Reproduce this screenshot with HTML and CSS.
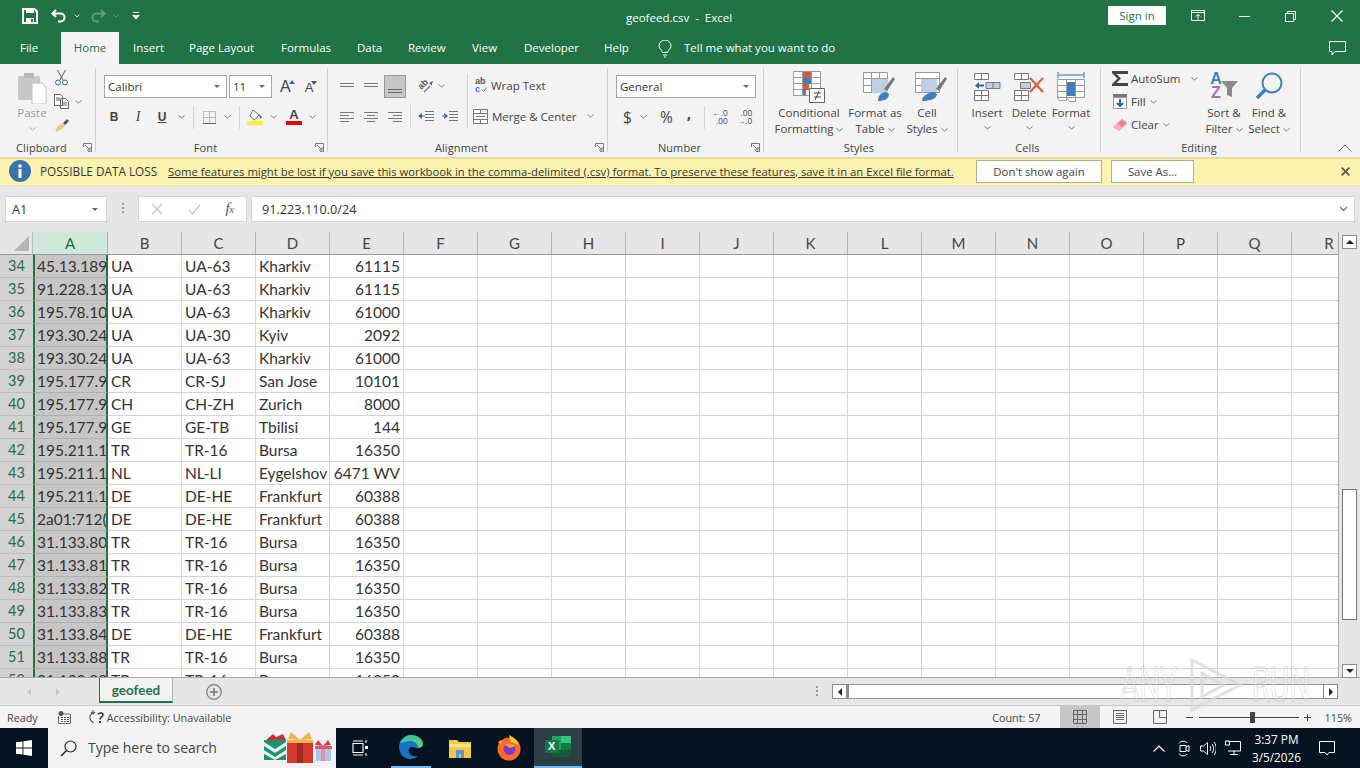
FILE: index.html
```html
<!DOCTYPE html>
<html>
    <head>
        <meta charset="UTF-8">
        <title>geofeed.csv - Excel</title>
        <link rel="stylesheet" href="styles.css">
    </head>
    <body>
        <div class="application">
            <!-- title bar -->
            <div class="titlebar">
                <div class="quick-access">
                    <svg class="qa-save" width="16" height="16" viewBox="0 0 16 16"><path d="M1 1h11.5L15 3.5V15H1z" fill="none" stroke="#fff" stroke-width="2"/><path d="M4 1h8v4H4zM4 10h8v5H4z" fill="#fff"/><path d="M9 11h2v3H9z" fill="#217346"/></svg>
                    <svg class="qa-undo" width="16" height="14" viewBox="0 0 16 14"><path d="M5 1 1.5 4.5 5 8M2 4.5h7.5a4 4 0 0 1 0 8H7" fill="none" stroke="#fff" stroke-width="2"/></svg>
                    <svg class="caret" width="6" height="4" viewBox="0 0 6 4"><path d="M.5.500 3 3 5.500.500" fill="none" stroke="#cfe0d6"/></svg>
                    <svg class="qa-redo" width="16" height="14" viewBox="0 0 16 14"><path d="M11 1l3.500 3.500L11 8M14 4.500H6.500a4 4 0 0 0 0 8H9" fill="none" stroke="#5f9c7b" stroke-width="2"/></svg>
                    <svg class="caret" width="6" height="4" viewBox="0 0 6 4"><path d="M.5.500 3 3 5.500.500" fill="none" stroke="#5f9c7b"/></svg>
                    <svg class="qa-more" width="8" height="8" viewBox="0 0 8 8"><path d="M1 0h6v1H1zM0 3h8L4 7.500z" fill="#fff"/></svg>
                </div>
                <div class="doc-title">geofeed.csv &nbsp;-&nbsp; Excel</div>
                <div class="window-controls">
                    <button class="signin">Sign in</button>
                    <svg class="win-display" width="14" height="12" viewBox="0 0 14 12"><path d="M.5.500h13v10H.5zM.5 2.500h13M7 9.500V4.500M4.800 6.500 7 4.300l2.200 2.200" fill="none" stroke="#fff"/></svg>
                    <svg class="win-min" width="11" height="1" viewBox="0 0 11 1"><path d="M0 0h11v1H0z" fill="#fff"/></svg>
                    <svg class="win-max" width="11" height="11" viewBox="0 0 11 11"><path d="M.5 2.500h8v8h-8zM2.500 2.500v-2h8v8h-2" fill="none" stroke="#fff"/></svg>
                    <svg class="win-close" width="12" height="12" viewBox="0 0 12 12"><path d="M.5.500l11 11M11.500.500l-11 11" fill="none" stroke="#fff" stroke-width="1.100"/></svg>
                </div>
            </div>

            <!-- tabs -->
            <div class="tabs">
                <span class="tab tab-file">File</span>
                <span class="tab tab-active">Home</span>
                <span class="tab tab-insert">Insert</span>
                <span class="tab tab-layout">Page Layout</span>
                <span class="tab tab-formulas">Formulas</span>
                <span class="tab tab-data">Data</span>
                <span class="tab tab-review">Review</span>
                <span class="tab tab-view">View</span>
                <span class="tab tab-dev">Developer</span>
                <span class="tab tab-help">Help</span>
                <svg class="bulb" width="14" height="18" viewBox="0 0 14 18"><path d="M4.500 12.500C4 9.500 1 9 1 6a6 6 0 0 1 12 0c0 3-3 3.500-3.500 6.500zM5 15h4M6 17h2" fill="none" stroke="#fff"/></svg>
                <span class="tab tab-tell">Tell me what you want to do</span>
                <svg class="comment-icon" width="17" height="15" viewBox="0 0 17 15"><path d="M.5.500h16v10H6L3 14v-3.500H.5z" fill="none" stroke="#fff"/></svg>
            </div>

            <!-- ribbon -->
            <div class="ribbon">
                <div class="group group-clipboard">
                    <div class="group-body clipboard-body">
                        <div class="paste">
                            <svg width="30" height="33" viewBox="0 0 30 33"><path d="M1 5h22v24H1z" fill="#c8c8c8"/><path d="M7 2h10v5H7z" fill="#b5b5b5"/><path d="M15 12h10l4 4v17H15z" fill="#fff" stroke="#c4c4c4"/></svg>
                            <span class="muted">Paste</span>
                            <svg class="caret-s" width="7" height="4" viewBox="0 0 7 4"><path d="M.5.500 3.500 3l3-2.500" fill="none" stroke="#aaa"/></svg>
                        </div>
                        <div class="clip-tools">
                            <svg width="15" height="16" viewBox="0 0 15 16"><path d="M3.500 0 9 10M11.500 0 6 10" fill="none" stroke="#555"/><circle cx="4" cy="12.500" r="2.500" fill="none" stroke="#2c6aa6"/><circle cx="11" cy="12.500" r="2.500" fill="none" stroke="#2c6aa6"/></svg>
                            <div class="copy-row">
                                <svg width="15" height="15" viewBox="0 0 15 15"><path d="M.5.500h6l2 2v9h-8zM6.500 4.500h5l3 3v7h-8zM2 4h4M2 6h4M8 9h5M8 11h5" fill="#fff" stroke="#666"/></svg>
                                <svg class="caret-s" width="7" height="4" viewBox="0 0 7 4"><path d="M.5.500 3.500 3l3-2.500" fill="none" stroke="#777"/></svg>
                            </div>
                            <svg width="16" height="16" viewBox="0 0 16 16"><path d="M9 6l4-4 2 2-4 4z" fill="#555"/><path d="M8 6l3 3-3 3-5 3-2-2 3-4z" fill="#e6c98c"/></svg>
                        </div>
                    </div>
                    <div class="group-foot"><span class="group-label">Clipboard</span><svg class="launcher" width="9" height="9" viewBox="0 0 9 9"><path d="M.5 4V.500H8.500v8H5M2 2l5 5M7 4v3H4" fill="none" stroke="#777"/></svg></div>
                </div>

                <div class="group group-font">
                    <div class="group-body font-body">
                        <div class="tool-row font-row1">
                            <div class="select select-font"><span>Calibri</span><i class="drop"></i></div>
                            <div class="select select-size"><span>11</span><i class="drop"></i></div>
                            <span class="aa aa-grow">A<svg width="6" height="4" viewBox="0 0 6 4"><path d="M0 4l3-4 3 4z" fill="#2c6aa6"/></svg></span>
                            <span class="aa aa-shrink">A<svg width="6" height="4" viewBox="0 0 6 4"><path d="M0 0h6L3 4z" fill="#555"/></svg></span>
                        </div>
                        <div class="tool-row font-row2">
                            <b class="fmt fmt-b">B</b>
                            <i class="fmt fmt-i">I</i>
                            <u class="fmt fmt-u">U</u>
                            <svg class="caret-s caret-u" width="7" height="4" viewBox="0 0 7 4"><path d="M.5.500 3.500 3l3-2.500" fill="none" stroke="#777"/></svg>
                            <span class="vsep vsep-a"></span>
                            <svg class="borders" width="13" height="13" viewBox="0 0 13 13"><path d="M.5.500h12v12H.5zM6.500.500v12M.5 6.500h12" fill="none" stroke="#888" stroke-dasharray="1 1"/><path d="M0 12h13v1H0z" fill="#666"/></svg>
                            <svg class="caret-s" width="7" height="4" viewBox="0 0 7 4"><path d="M.5.500 3.500 3l3-2.500" fill="none" stroke="#777"/></svg>
                            <span class="vsep vsep-b"></span>
                            <svg class="fill-color" width="17" height="16" viewBox="0 0 17 16"><path d="M6 1l6 5-4.500 5L3 7z" fill="#fff" stroke="#666"/><path d="M12 5l3 3-2 2z" fill="#2c6aa6"/><path d="M0 12h16v4H0z" fill="#ffef2e"/></svg>
                            <svg class="caret-s caret-fill" width="7" height="4" viewBox="0 0 7 4"><path d="M.5.500 3.500 3l3-2.500" fill="none" stroke="#777"/></svg>
                            <span class="font-color">A</span>
                            <svg class="caret-s caret-color" width="7" height="4" viewBox="0 0 7 4"><path d="M.5.500 3.500 3l3-2.500" fill="none" stroke="#777"/></svg>
                        </div>
                    </div>
                    <div class="group-foot"><span class="group-label">Font</span><svg class="launcher" width="9" height="9" viewBox="0 0 9 9"><path d="M.5 4V.500H8.500v8H5M2 2l5 5M7 4v3H4" fill="none" stroke="#777"/></svg></div>
                </div>

                <div class="group group-align">
                    <div class="group-body align-body">
                        <div class="align-icons">
                            <div class="tool-row align-row">
                                <svg class="al" width="14" height="6" viewBox="0 0 14 6"><path d="M0 .5h14M0 3.500h14" stroke="#777"/></svg>
                                <svg class="al al-mid" width="14" height="6" viewBox="0 0 14 6"><path d="M0 .5h14M0 3.500h14" stroke="#777"/></svg>
                                <span class="al-bottom"><svg width="14" height="6" viewBox="0 0 14 6"><path d="M0 .5h14M0 3.500h14" stroke="#666"/></svg></span>
                                <span class="orient"><span>ab</span><svg width="16" height="15" viewBox="0 0 16 15"><path d="M6 13l6-6" stroke="#777" stroke-width="1.200"/><path d="M11 4l4-2-1.500 4.500z" fill="#2c6aa6"/></svg></span>
                                <svg class="caret-s" width="7" height="4" viewBox="0 0 7 4"><path d="M.5.500 3.500 3l3-2.500" fill="none" stroke="#777"/></svg>
                            </div>
                            <div class="tool-row align-row2">
                                <svg class="al" width="14" height="10" viewBox="0 0 14 10"><path d="M0 .5h14M0 3.500h9M0 6.500h14M0 9.500h9" stroke="#777"/></svg>
                                <svg class="al al-mid2" width="14" height="10" viewBox="0 0 14 10"><path d="M0 .5h14M3 3.500h8M0 6.500h14M3 9.500h8" stroke="#777"/></svg>
                                <svg class="al al-mid2" width="14" height="10" viewBox="0 0 14 10"><path d="M0 .5h14M5 3.500h9M0 6.500h14M5 9.500h9" stroke="#777"/></svg>
                                <span class="vsep vsep-c"></span>
                                <svg class="indent" width="16" height="11" viewBox="0 0 16 11"><path d="M7 .5h9M7 3.500h9M7 6.500h9M7 9.500h9" stroke="#777"/><path d="M0 5l4-3v6zM3 4.500h4v1H3z" fill="#2c6aa6"/></svg>
                                <svg class="indent indent-r" width="16" height="11" viewBox="0 0 16 11"><path d="M7 .5h9M7 3.500h9M7 6.500h9M7 9.500h9" stroke="#777"/><path d="M6 5 2 2v6zM0 4.500h3v1H0z" fill="#2c6aa6"/></svg>
                            </div>
                        </div>
                        <span class="vsep vsep-d"></span>
                        <div class="align-wrap">
                            <div class="wrap-row">
                                <span class="wrap-ico"><span>ab</span><span class="wrap-c"><span>c</span><svg width="6" height="5" viewBox="0 0 6 5"><path d="M.5 2.500l2 2 3-4" fill="none" stroke="#777"/></svg></span></span>
                                <span>Wrap Text</span>
                            </div>
                            <div class="wrap-row merge-row">
                                <svg width="15" height="15" viewBox="0 0 15 15"><path d="M.5.500h14v14H.5zM.5 4.500h14M.5 10.500h14M7.500.500v4M7.500 10.500v4M3 7.500h9" fill="#fff" stroke="#777"/></svg>
                                <span>Merge &amp; Center</span>
                                <svg class="caret-s merge-caret" width="7" height="4" viewBox="0 0 7 4"><path d="M.5.500 3.500 3l3-2.500" fill="none" stroke="#777"/></svg>
                            </div>
                        </div>
                    </div>
                    <div class="group-foot"><span class="group-label">Alignment</span><svg class="launcher" width="9" height="9" viewBox="0 0 9 9"><path d="M.5 4V.500H8.500v8H5M2 2l5 5M7 4v3H4" fill="none" stroke="#777"/></svg></div>
                </div>

                <div class="group group-number">
                    <div class="group-body number-body">
                        <div class="select select-general"><span>General</span><i class="drop"></i></div>
                        <div class="tool-row number-row">
                            <span class="num-sym num-dollar">$</span>
                            <svg class="caret-s" width="7" height="4" viewBox="0 0 7 4"><path d="M.5.500 3.500 3l3-2.500" fill="none" stroke="#777"/></svg>
                            <span class="num-sym num-pct">%</span>
                            <span class="num-sym num-comma">,</span>
                            <span class="vsep vsep-e"></span>
                            <span class="dec"><span class="dec-top"><em>←</em>.0</span><span>.00</span></span>
                            <span class="dec dec-right"><span>.00</span><span class="dec-top"><em>→</em>.0</span></span>
                        </div>
                    </div>
                    <div class="group-foot"><span class="group-label">Number</span><svg class="launcher" width="9" height="9" viewBox="0 0 9 9"><path d="M.5 4V.500H8.500v8H5M2 2l5 5M7 4v3H4" fill="none" stroke="#777"/></svg></div>
                </div>

                <div class="group group-styles">
                    <div class="group-body big-body styles-body">
                        <div class="big-btn btn-cond">
                            <svg width="32" height="32" viewBox="0 0 32 32"><path d="M.5.500h27v24H.5zM.5 6.500h27M.5 12.500h27M.5 18.500h27M9.500.500v24M18.500.500v24" fill="#fff" stroke="#999"/><path d="M1 1h8v6H1z" fill="#d9573f" transform="translate(9)"/><path d="M10 7h8v6h-8z" fill="#3f7fbf"/><path d="M10 13h6v6h-6z" fill="#d9573f"/><path d="M10 19h3v5h-3z" fill="#3f7fbf"/><path d="M16.500 17.500h15v14h-15z" fill="#fff" stroke="#666"/><path d="M21 22h7M21 26h7M26 20l-4 9" stroke="#444" fill="none"/></svg>
                            <span>Conditional<br>Formatting <svg class="caret-s" width="7" height="4" viewBox="0 0 7 4"><path d="M.5.500 3.500 3l3-2.500" fill="none" stroke="#777"/></svg></span>
                        </div>
                        <div class="big-btn btn-table">
                            <svg width="32" height="30" viewBox="0 0 32 30"><path d="M.5.500h24v20H.5zM.5 6.500h24M.5 13.500h24M8.500.500v20M16.500.500v20" fill="#fff" stroke="#999"/><path d="M9 7h16v14H9z" fill="#bccfe3"/><path d="M21 17l9-12 2 2-8 12z" fill="#777"/><path d="M15 29c0-6 4-9 8-9l3 2c0 5-5 7-11 7z" fill="#3f7fbf"/></svg>
                            <span>Format as<br>Table <svg class="caret-s" width="7" height="4" viewBox="0 0 7 4"><path d="M.5.500 3.500 3l3-2.500" fill="none" stroke="#777"/></svg></span>
                        </div>
                        <div class="big-btn btn-cell">
                            <svg width="32" height="30" viewBox="0 0 32 30"><path d="M.5.500h24v20H.5zM.5 6.500h24M.5 13.500h24" fill="#fff" stroke="#999"/><path d="M6 7h16v13H6z" fill="#bccfe3"/><path d="M21 17l9-12 2 2-8 12z" fill="#777"/><path d="M7 29c0-6 8-9 12-9l3 2c0 5-8 7-15 7z" fill="#3f7fbf"/></svg>
                            <span>Cell<br>Styles <svg class="caret-s" width="7" height="4" viewBox="0 0 7 4"><path d="M.5.500 3.500 3l3-2.500" fill="none" stroke="#777"/></svg></span>
                        </div>
                    </div>
                    <div class="group-foot"><span class="group-label">Styles</span></div>
                </div>

                <div class="group group-cells">
                    <div class="group-body big-body cells-body">
                        <div class="big-btn btn-insert">
                            <svg width="27" height="28" viewBox="0 0 27 28"><path d="M.5.500h14v6H.5zM7.500.500v6M.5 17.500h14v10H.5zM.5 22.500h14M7.500 17.500v10" fill="#fff" stroke="#777"/><path d="M12 9.500h14v6H12z" fill="#bccfe3" stroke="#777"/><path d="M19 9.500v6" stroke="#777"/><path d="M1 12.500l4-3.500v2.500h5v2H5V16z" fill="#2c6aa6"/></svg>
                            <span>Insert</span>
                            <svg class="caret-s" width="7" height="4" viewBox="0 0 7 4"><path d="M.5.500 3.500 3l3-2.500" fill="none" stroke="#777"/></svg>
                        </div>
                        <div class="big-btn btn-delete">
                            <svg width="31" height="28" viewBox="0 0 31 28"><path d="M.5.500h14v6H.5zM7.500.500v6M.5 17.500h14v10H.5zM.5 22.500h14M7.500 17.500v10" fill="#fff" stroke="#777"/><path d="M6.500 9.500h10v6h-10z" fill="#bccfe3" stroke="#777"/><path d="M16 5l13 14M29 5 16 19" stroke="#d9573f" stroke-width="2" fill="none"/></svg>
                            <span>Delete</span>
                            <svg class="caret-s" width="7" height="4" viewBox="0 0 7 4"><path d="M.5.500 3.500 3l3-2.500" fill="none" stroke="#777"/></svg>
                        </div>
                        <div class="big-btn btn-format">
                            <svg width="28" height="31" viewBox="0 0 28 31"><path d="M1 1v6M27 1v6M2 4h24" stroke="#2c6aa6" fill="none"/><path d="M.5 8.500h27v18H.5zM9.500 8.500v18M18.500 8.500v18M.5 14.500h27M.5 20.500h27" fill="#fff" stroke="#999"/><path d="M10 11h8v14h-8z" fill="#3f7fbf"/><path d="M.5 26.500h9v3h-7zM9.500 26.500h9v4h-6z" fill="#fff" stroke="#999"/></svg>
                            <span>Format</span>
                            <svg class="caret-s" width="7" height="4" viewBox="0 0 7 4"><path d="M.5.500 3.500 3l3-2.500" fill="none" stroke="#777"/></svg>
                        </div>
                    </div>
                    <div class="group-foot"><span class="group-label">Cells</span></div>
                </div>

                <div class="group group-editing">
                    <div class="group-body editing-body">
                        <div class="edit-list">
                            <div class="edit-row">
                                <svg width="16" height="15" viewBox="0 0 16 15"><path d="M0 0h16v3H4.500L9 7.500 4.500 12H16v3H0v-2l5.500-5.500L0 2z" fill="#444"/></svg>
                                <span>AutoSum</span>
                                <svg class="caret-s sum-caret" width="7" height="4" viewBox="0 0 7 4"><path d="M.5.500 3.500 3l3-2.500" fill="none" stroke="#777"/></svg>
                            </div>
                            <div class="edit-row">
                                <svg class="edit-ico" width="14" height="15" viewBox="0 0 14 15"><path d="M0 0h14v3H0z" fill="#777"/><path d="M.5 3.500h13v11H.5z" fill="#fff" stroke="#999"/><path d="M7 5v7M4 9l3 3 3-3" fill="none" stroke="#2c6aa6" stroke-width="2"/></svg>
                                <span>Fill</span>
                                <svg class="caret-s" width="7" height="4" viewBox="0 0 7 4"><path d="M.5.500 3.500 3l3-2.500" fill="none" stroke="#777"/></svg>
                            </div>
                            <div class="edit-row">
                                <svg class="edit-ico" width="14" height="12" viewBox="0 0 14 12"><path d="M9 0l5 4-8 8-6-4z" fill="#ee7f92"/><path d="M0 8l4-4 5 4-3 4z" fill="#f6b4c0"/></svg>
                                <span>Clear</span>
                                <svg class="caret-s" width="7" height="4" viewBox="0 0 7 4"><path d="M.5.500 3.500 3l3-2.500" fill="none" stroke="#777"/></svg>
                            </div>
                        </div>
                        <div class="big-btn btn-sort">
                            <div class="sort-ico">
                                <span class="az"><span class="az-a">A</span><span class="az-z">Z</span></span>
                                <svg width="17" height="16" viewBox="0 0 17 16"><path d="M0 0h17l-6 7v9l-5-2V7z" fill="#8a8a8a"/></svg>
                            </div>
                            <span>Sort &amp;<br>Filter <svg class="caret-s" width="7" height="4" viewBox="0 0 7 4"><path d="M.5.500 3.500 3l3-2.500" fill="none" stroke="#777"/></svg></span>
                        </div>
                        <div class="big-btn btn-find">
                            <svg width="28" height="28" viewBox="0 0 28 28"><circle cx="17" cy="11" r="9.500" fill="none" stroke="#3f7fbf" stroke-width="2"/><path d="M10 18 2 26" stroke="#3f7fbf" stroke-width="3.500"/></svg>
                            <span>Find &amp;<br>Select <svg class="caret-s" width="7" height="4" viewBox="0 0 7 4"><path d="M.5.500 3.500 3l3-2.500" fill="none" stroke="#777"/></svg></span>
                        </div>
                    </div>
                    <div class="group-foot"><span class="group-label">Editing</span></div>
                </div>

                <div class="ribbon-end">
                    <svg width="14" height="8" viewBox="0 0 14 8"><path d="M.5 7.500 7 1l6.500 6.500" fill="none" stroke="#666"/></svg>
                </div>
            </div>

            <!-- message bar -->
            <div class="message-bar">
                <svg class="info" width="22" height="22" viewBox="0 0 22 22"><circle cx="11" cy="11" r="11" fill="#3a74b0"/><path d="M9.500 9h3v9h-3z" fill="#fff"/><circle cx="11" cy="6" r="1.800" fill="#fff"/></svg>
                <span class="msg-title">POSSIBLE DATA LOSS</span>
                <a class="msg-link">Some features might be lost if you save this workbook in the comma-delimited (.csv) format. To preserve these features, save it in an Excel file format.</a>
                <button class="msg-btn btn-dont">Don't show again</button>
                <button class="msg-btn btn-save">Save As...</button>
                <svg class="msg-close" width="9" height="9" viewBox="0 0 9 9"><path d="M.7.700l7.600 7.600M8.300.700.700 8.300" stroke="#555" stroke-width="1.800" fill="none"/></svg>
            </div>

            <!-- formula bar -->
            <div class="formula-bar">
                <div class="name-box"><span>A1</span><i class="drop"></i></div>
                <span class="grip"></span>
                <div class="fx-box">
                    <svg width="12" height="12" viewBox="0 0 12 12"><path d="M1 1l10 10M11 1 1 11" stroke="#c8c8c8" stroke-width="1.500"/></svg>
                    <svg width="13" height="11" viewBox="0 0 13 11"><path d="M1 6l3.500 4L12 1" fill="none" stroke="#c8c8c8" stroke-width="1.500"/></svg>
                    <span class="fx">f<sub>x</sub></span>
                </div>
                <div class="formula-input"><span>91.223.110.0/24</span><svg width="9" height="6" viewBox="0 0 9 6"><path d="M1 1l3.500 3.500L8 1" fill="none" stroke="#777" stroke-width="1.300"/></svg></div>
            </div>

            <!-- sheet -->
            <div class="sheet-area">
                <div class="sheet-main">
                    <div class="col-heads">
                        <div class="corner"><i></i></div>
                        <div class="col col-a">A</div><div class="col">B</div><div class="col">C</div><div class="col">D</div><div class="col">E</div><div class="col">F</div><div class="col">G</div><div class="col">H</div><div class="col">I</div><div class="col">J</div><div class="col">K</div><div class="col">L</div><div class="col">M</div><div class="col">N</div><div class="col">O</div><div class="col">P</div><div class="col">Q</div><div class="col col-r">R</div>
                    </div>
                    <div class="rows">
                        <div class="row"><div class="num">34</div><div class="c a">45.13.189</div><div class="c">UA</div><div class="c">UA-63</div><div class="c">Kharkiv</div><div class="c n">61115</div></div>
                        <div class="row"><div class="num">35</div><div class="c a">91.228.13</div><div class="c">UA</div><div class="c">UA-63</div><div class="c">Kharkiv</div><div class="c n">61115</div></div>
                        <div class="row"><div class="num">36</div><div class="c a">195.78.10</div><div class="c">UA</div><div class="c">UA-63</div><div class="c">Kharkiv</div><div class="c n">61000</div></div>
                        <div class="row"><div class="num">37</div><div class="c a">193.30.24</div><div class="c">UA</div><div class="c">UA-30</div><div class="c">Kyiv</div><div class="c n">2092</div></div>
                        <div class="row"><div class="num">38</div><div class="c a">193.30.24</div><div class="c">UA</div><div class="c">UA-63</div><div class="c">Kharkiv</div><div class="c n">61000</div></div>
                        <div class="row"><div class="num">39</div><div class="c a">195.177.9</div><div class="c">CR</div><div class="c">CR-SJ</div><div class="c">San Jose</div><div class="c n">10101</div></div>
                        <div class="row"><div class="num">40</div><div class="c a">195.177.9</div><div class="c">CH</div><div class="c">CH-ZH</div><div class="c">Zurich</div><div class="c n">8000</div></div>
                        <div class="row"><div class="num">41</div><div class="c a">195.177.9</div><div class="c">GE</div><div class="c">GE-TB</div><div class="c">Tbilisi</div><div class="c n">144</div></div>
                        <div class="row"><div class="num">42</div><div class="c a">195.211.1</div><div class="c">TR</div><div class="c">TR-16</div><div class="c">Bursa</div><div class="c n">16350</div></div>
                        <div class="row"><div class="num">43</div><div class="c a">195.211.1</div><div class="c">NL</div><div class="c">NL-LI</div><div class="c">Eygelshov</div><div class="c n">6471 WV</div></div>
                        <div class="row"><div class="num">44</div><div class="c a">195.211.1</div><div class="c">DE</div><div class="c">DE-HE</div><div class="c">Frankfurt</div><div class="c n">60388</div></div>
                        <div class="row"><div class="num">45</div><div class="c a">2a01:712(</div><div class="c">DE</div><div class="c">DE-HE</div><div class="c">Frankfurt</div><div class="c n">60388</div></div>
                        <div class="row"><div class="num">46</div><div class="c a">31.133.80</div><div class="c">TR</div><div class="c">TR-16</div><div class="c">Bursa</div><div class="c n">16350</div></div>
                        <div class="row"><div class="num">47</div><div class="c a">31.133.81</div><div class="c">TR</div><div class="c">TR-16</div><div class="c">Bursa</div><div class="c n">16350</div></div>
                        <div class="row"><div class="num">48</div><div class="c a">31.133.82</div><div class="c">TR</div><div class="c">TR-16</div><div class="c">Bursa</div><div class="c n">16350</div></div>
                        <div class="row"><div class="num">49</div><div class="c a">31.133.83</div><div class="c">TR</div><div class="c">TR-16</div><div class="c">Bursa</div><div class="c n">16350</div></div>
                        <div class="row"><div class="num">50</div><div class="c a">31.133.84</div><div class="c">DE</div><div class="c">DE-HE</div><div class="c">Frankfurt</div><div class="c n">60388</div></div>
                        <div class="row"><div class="num">51</div><div class="c a">31.133.88</div><div class="c">TR</div><div class="c">TR-16</div><div class="c">Bursa</div><div class="c n">16350</div></div>
                        <div class="row"><div class="num">52</div><div class="c a">31.133.89</div><div class="c">TR</div><div class="c">TR-16</div><div class="c">Bursa</div><div class="c n">16350</div></div>
                    </div>
                </div>
                <div class="vscroll">
                    <div class="vs-head"><span class="sb-btn"><i class="tri-up"></i></span></div>
                    <div class="vs-track"><div class="vs-thumb"></div></div>
                    <span class="sb-btn"><i class="tri-down"></i></span>
                </div>
            </div>

            <!-- sheet tabs -->
            <div class="tabbar">
                <i class="nav-tri nav-left"></i>
                <i class="nav-tri nav-right"></i>
                <div class="sheet-tab">geofeed</div>
                <svg class="add-sheet" width="16" height="16" viewBox="0 0 16 16"><circle cx="8" cy="8" r="7.300" fill="none" stroke="#777" stroke-width="1.200"/><path d="M8 4v8M4 8h8" stroke="#777" stroke-width="1.500"/></svg>
                <span class="tab-grip"></span>
                <div class="hscroll">
                    <span class="sb-btn"><i class="tri-left"></i></span>
                    <div class="hs-thumb"></div>
                    <span class="sb-btn"><i class="tri-right"></i></span>
                </div>
            </div>

            <!-- status bar -->
            <div class="statusbar">
                <span class="st-ready">Ready</span>
                <svg class="st-macro" width="13" height="13" viewBox="0 0 13 13"><path d="M3 3h9.500v9.500H.5V5" fill="#fff" stroke="#666"/><circle cx="3" cy="2.500" r="2.500" fill="#555"/><path d="M3 6h2v1H3zM6 6h2v1H6zM9 6h2v1H9zM3 8h2v1H3zM6 8h2v1H6zM9 8h2v1H9zM3 10h2v1H3zM6 10h2v1H6zM9 10h2v1H9z" fill="#555"/></svg>
                <svg class="st-access" width="16" height="14" viewBox="0 0 16 14"><path d="M3 3.500a5 5 0 0 0 2 9M4 0v4M2 2l2 2 2-2" fill="none" stroke="#555" stroke-width="1.100"/><path d="M9 4.500c1-2 5-2 5 .5 0 2-3 2-3 4.500" fill="none" stroke="#333" stroke-width="1.500"/><path d="M10 11h2v2h-2z" fill="#333"/></svg>
                <span class="st-acc-text">Accessibility: Unavailable</span>
                <span class="st-count">Count: 57</span>
                <div class="view-btn view-active"><svg width="14" height="14" viewBox="0 0 14 14"><path d="M.5.500h13v13H.5zM4.500.500v13M9.500.500v13M.5 4.500h13M.5 9.500h13" fill="none" stroke="#666"/></svg></div>
                <div class="view-btn"><svg width="14" height="14" viewBox="0 0 14 14"><path d="M.5.500h13v13H.5z" fill="none" stroke="#666"/><path d="M3 3.500h8M3 5.500h8M3 7.500h8M3 9.500h8" stroke="#666"/></svg></div>
                <div class="view-btn"><svg width="14" height="14" viewBox="0 0 14 14"><path d="M.5.500h13v13H.5zM6.500.500v7M6.500 7.500h7" fill="none" stroke="#666"/></svg></div>
                <div class="zoom">
                    <span class="zoom-sign zoom-minus"></span>
                    <div class="zoom-track"><span class="zoom-thumb"></span></div>
                    <span class="zoom-sign zoom-plus"></span>
                    <span class="zoom-val">115%</span>
                </div>
            </div>

            <!-- taskbar -->
            <div class="taskbar">
                <div class="start"><svg width="16" height="16" viewBox="0 0 16 16"><path d="M0 2.300 6.500 1.400V7.600H0zM7.400 1.300 16 0V7.600H7.400zM0 8.400H6.500V14.600L0 13.700zM7.400 8.400H16V16L7.400 14.700z" fill="#fff"/></svg></div>
                <div class="search">
                    <svg width="17" height="17" viewBox="0 0 17 17"><circle cx="10.500" cy="6.500" r="5.500" fill="none" stroke="#222" stroke-width="1.200"/><path d="M6.500 10.500 1 16" stroke="#222" stroke-width="1.400"/></svg>
                    <span>Type here to search</span>
                    <svg class="gifts" width="68" height="32" viewBox="0 0 68 32"><path d="M0 8h22v20H0z" fill="#1f8f78"/><path d="M0 10l11 7 11-7v4l-11 7-11-7zM0 18l11 7 11-7v4l-11 6-11-6z" fill="#e7f0e8"/><path d="M2 8l7-6 3 3 7-3 3 6z" fill="#c23535"/><path d="M23 8h26v23H23z" fill="#d43a2c"/><path d="M33 8h6v23h-6z" fill="#a82820"/><path d="M23 8h26v3H23z" fill="#e8b64c"/><path d="M36 8 27 0l-3 7zM36 8l9-8 3 7z" fill="#e8b64c"/><path d="M52 16h15v13H52z" fill="#a9c6ea"/><path d="M57 16h4v13h-4z" fill="#e78fa0"/><path d="M51 14h17v3H51z" fill="#d95a6b"/><path d="M59 14l-5-6-3 5zM59 14l5-6 3 5z" fill="#c9404f"/></svg>
                </div>
                <div class="task-btn task-view"><svg width="16" height="16" viewBox="0 0 16 16"><path d="M1 3.500h10v9H1zM1 1h10M1 15h10M14 0v3M14 13v3" fill="none" stroke="#fff" stroke-width="1.100"/><path d="M13 6h3v3h-3z" fill="#fff"/></svg></div>
                <div class="task-btn task-edge"><svg width="24" height="24" viewBox="0 0 24 24"><defs><linearGradient id="edgeg" x1="0" y1="0" x2="1" y2="1"><stop offset="0" stop-color="#2fc0a8"/><stop offset="1" stop-color="#62d36f"/></linearGradient></defs><path d="M12 0a12 12 0 0 0-12 12c0 7 5 12 11 12 3 0 6-1 8-3-3 1-8 0-9-4-1-3 1-5 3-5s4 1 5 1 6-1 6-5C24 4 18 0 12 0z" fill="#1773c4"/><path d="M1 8C3 3 8 0 12 0c6 0 12 4 12 9 0 3-3 4-5 4 0-4-3-7-8-7-4 0-7 2-10 2z" fill="url(#edgeg)"/></svg></div>
                <div class="task-btn task-folder"><svg width="22" height="20" viewBox="0 0 22 20"><path d="M0 2h8l2 2h12v16H0z" fill="#f5c842"/><path d="M0 6h22v3H0z" fill="#fbe38c"/><path d="M7 12h8v8H7z" fill="#4b9ad9"/><path d="M10 16h2v4h-2z" fill="#e9c23b"/></svg></div>
                <div class="task-btn task-firefox"><svg width="24" height="26" viewBox="0 0 24 26"><circle cx="12" cy="14" r="11.500" fill="#ff6a2b"/><path d="M12 0c4 2 9 5 10 10L14 7z" fill="#ffcc29"/><path d="M1 8c1-2 2-3 3-3l1 4z" fill="#ff9a2b"/><circle cx="12.500" cy="14" r="6" fill="#7d3bc9"/><path d="M8 10c3-3 8-2 10 1l-5 2z" fill="#ff9a2b"/></svg></div>
                <div class="task-btn task-excel">
                    <div class="xl-ico"><svg width="26" height="22" viewBox="0 0 26 22"><path d="M7 0h19v21H7z" fill="#21a366"/><path d="M16 0h10v7H16z" fill="#33c481"/><path d="M16 7h10v7H16z" fill="#107c41"/><path d="M7 14h19v7H7z" fill="#185c37"/><path d="M0 4h14v13H0z" fill="#0f7a43"/></svg><span>X</span></div>
                </div>
                <div class="tray">
                    <svg class="tray-chev" width="12" height="7" viewBox="0 0 12 7"><path d="M.5 6.500 6 1l5.500 5.500" fill="none" stroke="#fff" stroke-width="1.200"/></svg>
                    <svg class="tray-cam" width="12" height="17" viewBox="0 0 12 17"><path d="M2 5.500h6v6H2zM8 7l3-1.500v6L8 10M1 3.500C2 .5 8 .5 9 3M1 13.500C2 16.500 8 16.500 9 14" fill="none" stroke="#fff"/></svg>
                    <svg class="tray-vol" width="16" height="15" viewBox="0 0 16 15"><path d="M.5 5h3L7.500 1.500v12L3.500 10h-3zM10 5c1 1.500 1 3.500 0 5M12 3c2 2.500 2 6.500 0 9M14 1c3 3.500 3 9.500 0 13" fill="none" stroke="#fff"/></svg>
                    <svg class="tray-net" width="16" height="16" viewBox="0 0 16 16"><path d="M3 1.500h12.500v9.500H3M9 11v3M5 14.500h8" fill="none" stroke="#fff"/><path d="M.5 1h4v4h-4z" fill="none" stroke="#fff"/></svg>
                    <div class="clock"><span>3:37 PM</span><span>3/5/2026</span></div>
                    <svg class="tray-note" width="16" height="15" viewBox="0 0 16 15"><path d="M.5.500h15v11H10L8 14l-2-2.500H.5z" fill="none" stroke="#fff"/></svg>
                </div>
            </div>

            <!-- sandbox watermark -->
            <div class="watermark">
                <span class="wm-text">ANY</span>
                <svg width="54" height="56" viewBox="0 0 54 56"><path d="M3 3 51 28 3 53zM13 16 34 28 13 40z" fill="none" stroke="#d8d8d8" stroke-width="3" opacity=".75"/></svg>
                <span class="wm-text">RUN</span>
            </div>
        </div>
    </body>
</html>
```

FILE: styles.css
```css
*{
    box-sizing: border-box;
}
html, body{
    margin: 0;
    height: 100%;
    overflow: hidden;
}
body{
    font-family: 'Open Sans', 'Noto Sans', sans-serif;
    font-size: 11.5px;
    color: #444;
}
svg{
    display: block;
    flex: none;
}
button{
    font-family: inherit;
    padding: 0;
    cursor: default;
}
.application{
    width: 1360px;
    height: 768px;
    display: flex;
    flex-direction: column;
    position: relative;
    background-color: #f3f3f3;
}

/* title bar + tabs */
.titlebar{
    height: 32px;
    display: flex;
    align-items: center;
    position: relative;
    background-color: #217346;
    color: #fff;
}
.quick-access{
    display: flex;
    align-items: center;
    padding-left: 22px;
}
.qa-undo{ margin-left: 13px; }
.quick-access .caret{ margin-left: 7px; }
.qa-redo{ margin-left: 10px; }
.qa-more{ margin-left: 13px; }
.doc-title{
    position: absolute;
    left: 626px;
    top: 9px;
    font-size: 11.5px;
    line-height: 18px;
    color: #fff;
}
.window-controls{
    display: flex;
    align-items: center;
    margin-left: auto;
}
.signin{
    width: 58px;
    height: 19px;
    margin-top: -2px;
    border: none;
    border-radius: 1px;
    background-color: #fff;
    color: #217346;
    font-size: 11.5px;
}
.win-display{ margin-left: 25px; }
.win-min{ margin-left: 34px; }
.win-max{ margin-left: 35px; }
.win-close{ margin: 0 17px 0 35px; }
.tabs{
    height: 32px;
    display: flex;
    align-items: flex-end;
    position: relative;
    background-color: #217346;
}
.tab{
    height: 32px;
    line-height: 32px;
    color: #fff;
    font-size: 11.5px;
    white-space: nowrap;
}
.tab-file{ margin-left: 20px; width: 41px; }
.tab-active{
    width: 58px;
    text-align: center;
    background-color: #f3f3f3;
    color: #217346;
}
.tab-insert{ margin-left: 14px; width: 56px; }
.tab-layout{ width: 92px; }
.tab-formulas{ width: 76px; }
.tab-data{ width: 51px; }
.tab-review{ width: 64px; }
.tab-view{ width: 52px; }
.tab-dev{ width: 80px; }
.tab-help{ width: 54px; }
.bulb{ margin: 0 0 6px 0; }
.tab-tell{ margin-left: 12px; }
.comment-icon{ margin: 0 14px 8px auto; }

/* ribbon */
.ribbon{
    height: 93px;
    display: flex;
    padding-top: 4px;
    background-color: #f3f3f3;
}
.group{
    display: flex;
    flex-direction: column;
    border-right: 1px solid #d0d0d0;
    height: 84px;
}
.group-clipboard{ width: 96px; }
.group-font{ width: 232px; }
.group-align{ width: 280px; }
.group-number{ width: 156px; }
.group-styles{ width: 194px; }
.group-cells{ width: 143px; }
.group-editing{ width: 200px; }
.group-body{
    flex: 1;
    min-height: 0;
}
.group-foot{
    height: 18px;
    display: flex;
    align-items: center;
    padding-right: 3px;
    padding-top: 8px;
}
.group-label{
    flex: 1;
    text-align: center;
    font-size: 11px;
    letter-spacing: .1px;
}
.muted{ color: #9b9b9b; }
.caret-s{
    display: inline-block;
    vertical-align: middle;
}
.clipboard-body{
    display: flex;
    padding-left: 16px;
}
.paste{
    width: 32px;
    display: flex;
    flex-direction: column;
    align-items: center;
    padding-top: 3px;
    line-height: 14px;
}
.paste .muted{ margin-top: 2px; }
.paste .caret-s{ margin-top: 7px; }
.clip-tools{
    display: flex;
    flex-direction: column;
    padding: 2px 0 0 6px;
    gap: 8px;
}
.copy-row{
    display: flex;
    align-items: center;
    gap: 6px;
}
.tool-row{
    display: flex;
    align-items: center;
}
.font-body{ padding: 7px 0 0 8px; }
.select{
    height: 23px;
    display: flex;
    align-items: center;
    justify-content: space-between;
    padding: 0 6px 0 3px;
    border: 1px solid #a8a8a8;
    background-color: #fff;
    font-size: 11.5px;
    color: #333;
}
.drop{
    width: 0;
    height: 0;
    border-left: 3px solid transparent;
    border-right: 3px solid transparent;
    border-top: 3px solid #666;
}
.select-font{ width: 123px; }
.select-size{ width: 43px; margin-left: 2px; }
.aa{
    display: flex;
    align-items: flex-start;
    font-family: 'Liberation Sans', sans-serif;
    color: #444;
}
.aa-grow{
    margin-left: 8px;
    font-size: 16px;
    line-height: 17px;
}
.aa-shrink{
    margin-left: 10px;
    font-size: 13px;
    line-height: 17px;
    padding-top: 1px;
}
.aa svg{ margin: 2px 0 0 -2px; }
.font-row2{ margin-top: 8px; height: 22px; }
.fmt{
    width: 10px;
    font-family: 'Liberation Serif', serif;
    font-size: 14px;
    text-align: center;
    color: #444;
}
.fmt-b{ margin-left: 5px; font-family: 'Liberation Sans', sans-serif; font-size: 12px; }
.fmt-i{ margin-left: 14px; }
.fmt-u{ margin-left: 14px; font-family: 'Liberation Sans', sans-serif; font-size: 12px; font-weight: bold; }
.font-row2 .caret-s{ margin-left: 8px; }
.font-row2 .caret-u{ margin-left: 11px; }
.font-row2 .caret-fill{ margin-left: 6px; }
.font-row2 .caret-color{ margin-left: 7px; }
.vsep{
    width: 1px;
    height: 23px;
    background-color: #d4d4d4;
    flex: none;
}
.vsep-a{ margin-left: 8px; }
.borders{ margin-left: 9px; }
.vsep-b{ margin-left: 8px; }
.fill-color{ margin-left: 7px; }
.font-color{
    width: 16px;
    height: 16px;
    margin-left: 9px;
    text-align: center;
    font: bold 13px/12px 'Liberation Sans', sans-serif;
    color: #444;
    border-bottom: 4px solid #e0000f;
}
.align-body{
    display: flex;
    padding: 6px 0 0 12px;
}
.align-row{ height: 24px; }
.al-mid{ margin-left: 10px; }
.al-bottom{
    width: 22px;
    height: 23px;
    margin-left: 6px;
    padding: 13px 0 0 3px;
    background-color: #c6c6c6;
    border: 1px solid #999;
}
.orient{
    width: 16px;
    height: 15px;
    margin-left: 12px;
    position: relative;
}
.orient span{
    position: absolute;
    left: 0;
    top: 0;
    font: bold 9px/11px 'Liberation Sans', sans-serif;
    color: #555;
    transform: rotate(-45deg);
}
.align-row .caret-s{ margin-left: 4px; }
.align-row2{ height: 25px; margin-top: 6px; }
.al-mid2{ margin-left: 10px; }
.vsep-c{ margin-left: 8px; }
.indent{ margin-left: 7px; }
.indent-r{ margin-left: 8px; }
.vsep-d{ height: 54px; margin-left: 9px; }
.align-wrap{
    display: flex;
    flex-direction: column;
    padding-left: 5px;
    font-size: 11.5px;
    color: #444;
}
.wrap-row{
    height: 24px;
    display: flex;
    align-items: center;
    gap: 4px;
    margin-top: -1px;
}
.wrap-ico{
    width: 13px;
    margin-left: 2px;
    margin-right: -1px;
    display: flex;
    flex-direction: column;
    font: bold 9px/8px 'Liberation Sans', sans-serif;
    color: #555;
}
.wrap-c{
    display: flex;
    align-items: center;
    gap: 1px;
    color: #3f7fbf;
}
.merge-row{ margin-top: 7px; }
.merge-caret{ margin-left: 6px; }
.number-body{ padding: 7px 0 0 8px; }
.select-general{ width: 140px; }
.number-row{ margin-top: 8px; height: 22px; }
.num-sym{ font-size: 15.5px; color: #444; line-height: 22px; }
.num-dollar{ margin-left: 7px; margin-right: 8px; }
.num-pct{ margin-left: 13px; }
.num-comma{ margin-left: 14px; font-weight: bold; margin-top: -8px; }
.vsep-e{ margin-left: 13px; }
.dec{
    display: flex;
    flex-direction: column;
    font: 8.5px/8px 'Liberation Sans', sans-serif;
    margin-left: 7px;
    color: #555;
    text-align: right;
}
.dec-right{ margin-left: 9px; }
.dec em{ color: #2c6aa6; font-style: normal; font-weight: bold; }
.big-body{
    display: flex;
}
.big-btn{
    display: flex;
    flex-direction: column;
    align-items: center;
    text-align: center;
    line-height: 16px;
    font-size: 11.5px;
    color: #444;
    white-space: nowrap;
}
.big-btn > svg:first-child{ height: 32px; }
.big-btn > span{ margin-top: 2px; }
.styles-body{ padding: 3px 0 0 10px; }
.btn-cond{ width: 70px; }
.btn-table{ width: 62px; }
.btn-table > svg:first-child{ margin-left: 8px; }
.btn-cell{ width: 44px; margin-left: -1px; }
.btn-cell > svg:first-child{ margin-left: 8px; }
.cells-body{ padding: 5px 0 0 8px; }
.cells-body .big-btn > svg:first-child{ height: 28px; }
.cells-body .big-btn > span{ margin-top: 4px; }
.cells-body .big-btn > .caret-s{ margin-top: 5px; }
.btn-insert{ width: 42px; }
.btn-delete{ width: 42px; }
.btn-format{ width: 42px; margin-top: -2px; }
.cells-body .btn-format > svg:first-child{ height: 31px; }
.cells-body .btn-format > span{ margin-top: 3px; }
.editing-body{
    display: flex;
    padding: 5px 0 0 11px;
}
.edit-list{
    width: 96px;
    margin-top: -6px;
    display: flex;
    flex-direction: column;
    flex: none;
}
.edit-row{
    height: 23px;
    flex: none;
    display: grid;
    grid-template-columns: 19px auto auto;
    justify-content: start;
    align-items: center;
    column-gap: 4px;
}
.edit-row > span{ margin-left: -4px; }
.edit-ico{ margin-left: 1px; }
.sum-caret{ margin-left: 7px; }
.btn-sort{ width: 46px; margin-left: -7px; flex: none; }
.sort-ico{
    height: 28px;
    margin-top: -1px;
    display: flex;
    align-items: center;
}
.sort-ico svg{ margin: 5px 0 0 -1px; }
.az{
    display: flex;
    flex-direction: column;
    font: bold 16px/14px 'Liberation Sans', sans-serif;
}
.az-a{ color: #3f7fbf; }
.az-z{ color: #a56cc1; }
.btn-sort > span{ margin-top: 5px; }
.btn-find{ width: 42px; margin-left: 1px; flex: none; }
.btn-find > svg:first-child{ height: 28px; margin-top: -1px; }
.btn-find > span{ margin-top: 5px; }
.ribbon-end{
    flex: 1;
    display: flex;
    justify-content: flex-end;
    align-items: flex-end;
    padding: 0 8px 5px 0;
}

/* message bar */
.message-bar{
    height: 29px;
    display: flex;
    align-items: center;
    padding: 0 0 2px 9px;
    background-color: #fdf3b0;
    border-top: 2px solid #e4dca4;
    border-bottom: 1px solid #eee5a8;
    color: #333;
    font-size: 11px;
}
.msg-title{
    margin-left: 9px;
    width: 118px;
    white-space: nowrap;
    font-size: 11.8px;
}
.msg-link{
    margin-left: 10px;
    width: 787px;
    white-space: nowrap;
    text-decoration: underline;
    font-size: 11.3px;
}
.msg-btn{
    height: 23px;
    border: 1px solid #b3ad87;
    background-color: #fff;
    color: #444;
    font-size: 11.4px;
}
.btn-dont{ margin-left: 21px; width: 126px; }
.btn-save{ margin-left: 9px; width: 83px; }
.msg-close{ margin-left: 147px; }

/* formula bar */
.formula-bar{
    height: 46px;
    display: flex;
    padding: 10px 5px 10px 5px;
    background-color: #e6e6e6;
    align-items: stretch;
}
.name-box{
    width: 102px;
    display: flex;
    align-items: center;
    justify-content: space-between;
    padding: 0 8px 0 6px;
    background-color: #fff;
    border: 1px solid #d5d5d5;
    font-size: 12.7px;
    color: #333;
}
.grip{
    width: 2px;
    margin: 7px 9px 7px 15px;
    background-image: repeating-linear-gradient(#999 0 2px, transparent 2px 4px);
}
.fx-box{
    width: 109px;
    margin-left: 5px;
    display: flex;
    align-items: center;
    padding: 0 12px;
    justify-content: space-between;
    background-color: #fff;
    border: 1px solid #d5d5d5;
}
.fx{
    font-family: 'Liberation Serif', serif;
    font-style: italic;
    font-size: 15px;
    color: #555;
    line-height: 14px;
}
.fx sub{ font-size: 10px; vertical-align: baseline; }
.formula-input{
    flex: 1;
    margin-left: 4px;
    display: flex;
    align-items: center;
    justify-content: space-between;
    padding: 0 6px 0 10px;
    background-color: #fff;
    border: 1px solid #d5d5d5;
    font-size: 12.7px;
    color: #333;
}

/* sheet */
.sheet-area{
    height: 446px;
    display: flex;
    background-color: #e6e6e6;
    border-bottom: 1px solid #a8a8a8;
}
.sheet-main{
    width: 1338px;
    display: flex;
    flex-direction: column;
    overflow: hidden;
}
.col-heads{
    height: 23px;
    flex: none;
    display: grid;
    grid-template-columns: 33px 75px repeat(16, 74px) 1fr;
    border-bottom: 1px solid #9b9b9b;
}
.corner{
    position: relative;
    background-color: #e6e6e6;
    border-right: 1px solid #bbb;
}
.corner i{
    position: absolute;
    right: 3px;
    bottom: 3px;
    width: 0;
    height: 0;
    border-left: 15px solid transparent;
    border-bottom: 15px solid #b5b5b5;
}
.col{
    text-align: center;
    font-family: 'Lato', sans-serif;
    font-size: 15px;
    line-height: 22px;
    color: #444;
    border-right: 1px solid #b5b5b5;
}
.col-a{
    background-color: #cfe8da;
    color: #1d6b40;
    border-right-color: #9ebcab;
}
.col-r{
    border-right: none;
    padding-left: 28px;
}
.rows{
    flex: 1;
    min-height: 0;
    overflow: hidden;
    background-color: #fff;
    background-image:
        repeating-linear-gradient(to right, #d4d4d4 0 1px, transparent 1px 74px),
        repeating-linear-gradient(to bottom, transparent 0 22px, #d4d4d4 22px 23px);
    background-position: 107px 0, 0 0;
    background-size: 100% 100%, 100% 100%;
}
.row{
    height: 23px;
    display: grid;
    grid-template-columns: 33px 75px repeat(4, 74px);
    font-family: 'Lato', sans-serif;
    font-size: 15.5px;
    line-height: 22px;
    color: #333;
}
.num{
    text-align: center;
    font-size: 14.5px;
    color: #2a6a47;
    background-color: #d2d2d2;
    border-bottom: 1px solid #bdbdbd;
}
.c{
    overflow: hidden;
    white-space: nowrap;
    padding: 0 3px;
}
.c.a{
    padding: 0 0 0 2px;
    background-color: #c6c6c6;
    border-left: 2px solid #217346;
    border-right: 2px solid #217346;
    border-bottom: 1px solid #b0b0b0;
}
.c.n{
    text-align: right;
    padding-right: 4px;
}
.vscroll{
    width: 22px;
    display: flex;
    flex-direction: column;
    align-items: center;
    padding: 3px 0 0;
    background-color: #e6e6e6;
    border-left: 1px solid #a8a8a8;
}
.vs-head{ height: 16px; }
.vs-track{
    flex: 1;
    width: 100%;
    padding: 238px 3px 0;
}
.vs-thumb{
    height: 131px;
    background-color: #fff;
    border: 1px solid #777;
}
.sb-btn{
    width: 15px;
    height: 14px;
    display: flex;
    align-items: center;
    justify-content: center;
    flex: none;
    background-color: #fff;
    border: 1px solid #8c8c8c;
}
.vscroll > .sb-btn{ margin-bottom: -1px; }
.tri-up, .tri-down, .tri-left, .tri-right{
    width: 0;
    height: 0;
    border: 4px solid transparent;
}
.tri-up{ border-top: none; border-bottom-color: #222; }
.tri-down{ border-bottom: none; border-top-color: #222; }
.tri-left{ border-left: none; border-right-color: #222; }
.tri-right{ border-right: none; border-left-color: #222; }

/* sheet tabs */
.tabbar{
    height: 28px;
    display: flex;
    align-items: center;
    background-color: #e6e6e6;
    border-bottom: 1px solid #c8c8c8;
}
.nav-tri{
    width: 0;
    height: 0;
    border: 4px solid transparent;
}
.nav-left{
    margin-left: 27px;
    border-left: none;
    border-right-color: #c4c4c4;
}
.nav-right{
    margin-left: 25px;
    border-right: none;
    border-left-color: #c4c4c4;
}
.sheet-tab{
    width: 74px;
    height: 25px;
    margin: -3px 0 0 39px;
    text-align: center;
    line-height: 25px;
    font-family: 'Lato', sans-serif;
    font-weight: bold;
    font-size: 13.5px;
    color: #217346;
    background-color: #f3f3f3;
    border: 1px solid #b5b5b5;
    border-top: none;
    border-bottom: 2px solid #217346;
    border-left-color: #217346;
}
.add-sheet{ margin-left: 33px; }
.tab-grip{
    width: 2px;
    height: 12px;
    margin-left: 594px;
    background-image: repeating-linear-gradient(#999 0 2px, transparent 2px 4px);
}
.hscroll{
    width: 506px;
    margin: 0 0 0 14px;
    height: 15px;
    display: flex;
    align-items: center;
}
.hscroll .sb-btn{ width: 15px; height: 15px; }
.hs-thumb{
    flex: 1;
    height: 15px;
    background-color: #fff;
    border-top: 1px solid #999;
    border-bottom: 1px solid #999;
    border-left: 2px solid #888;
}

/* status bar */
.statusbar{
    height: 22px;
    display: flex;
    align-items: center;
    background-color: #f3f3f3;
    font-size: 10.8px;
    color: #444;
    white-space: nowrap;
}
.st-ready{ margin-left: 7px; }
.st-macro{ margin-left: 20px; }
.st-access{ margin-left: 18px; }
.st-acc-text{ margin-left: 2px; }
.st-count{ margin: 0 19px 0 auto; }
.view-btn{
    width: 40px;
    height: 22px;
    display: flex;
    align-items: center;
    justify-content: center;
}
.view-active{ background-color: #c6c6c6; }
.zoom{
    display: flex;
    align-items: center;
    margin: 0 8px 0 6px;
}
.zoom-sign{
    width: 7px;
    height: 1px;
    background-color: #444;
    position: relative;
    flex: none;
}
.zoom-plus::after{
    content: "";
    position: absolute;
    left: 3px;
    top: -3px;
    width: 1px;
    height: 7px;
    background-color: #444;
}
.zoom-track{
    width: 100px;
    height: 1px;
    margin: 0 5px 0 6px;
    background-color: #444;
    position: relative;
}
.zoom-thumb{
    position: absolute;
    left: 51px;
    top: -5px;
    width: 5px;
    height: 11px;
    background-color: #444;
}
.zoom-val{ margin-left: 14px; }

/* taskbar */
.taskbar{
    height: 40px;
    display: flex;
    align-items: center;
    background-color: #04131f;
    color: #fff;
}
.start{
    width: 48px;
    height: 40px;
    display: flex;
    align-items: center;
    justify-content: center;
}
.search{
    width: 288px;
    height: 40px;
    display: flex;
    align-items: center;
    padding-left: 12px;
    background-color: #f2f2f2;
    color: #444;
    font-family: 'Open Sans', sans-serif;
    font-size: 14px;
}
.search > span{ margin: -2px 0 0 11px; }
.gifts{ margin-left: auto; margin-right: 4px; }
.task-btn{
    width: 49px;
    height: 40px;
    flex: none;
    display: flex;
    align-items: center;
    justify-content: center;
}
.task-view{ width: 48px; }
.task-edge{ border-bottom: 2px solid #76b9ed; width: 40px; margin: 0 4px 0 7px; }
.task-excel{
    width: 48px;
    margin-left: 1px;
    background-color: #2d3d47;
    border-bottom: 2px solid #76b9ed;
}
.xl-ico{ position: relative; }
.xl-ico span{
    position: absolute;
    left: 3px;
    top: 4px;
    font: bold 11px/13px 'Liberation Sans', sans-serif;
    color: #fff;
}
.tray{
    display: flex;
    align-items: center;
    margin-left: auto;
}
.tray-cam{ margin-left: 13px; }
.tray-vol{ margin-left: 10px; }
.tray-net{ margin-left: 9px; }
.clock{
    width: 47px;
    margin-left: 12px;
    display: flex;
    flex-direction: column;
    align-items: center;
    font-size: 11.8px;
    line-height: 18px;
    white-space: nowrap;
}
.tray-note{ margin: 0 25px 0 19px; }

/* watermark lies over the scrollbar + status bar */
.watermark{
    position: absolute;
    left: 1120px;
    top: 657px;
    display: flex;
    align-items: center;
    gap: 9px;
    pointer-events: none;
}
.wm-text{
    width: 60px;
    font: 49px/56px 'Roboto', sans-serif;
    color: rgba(255, 255, 255, .25);
    -webkit-text-stroke: 1px rgba(190, 190, 190, .55);
    transform: scaleX(.6);
    transform-origin: left center;
}
```
